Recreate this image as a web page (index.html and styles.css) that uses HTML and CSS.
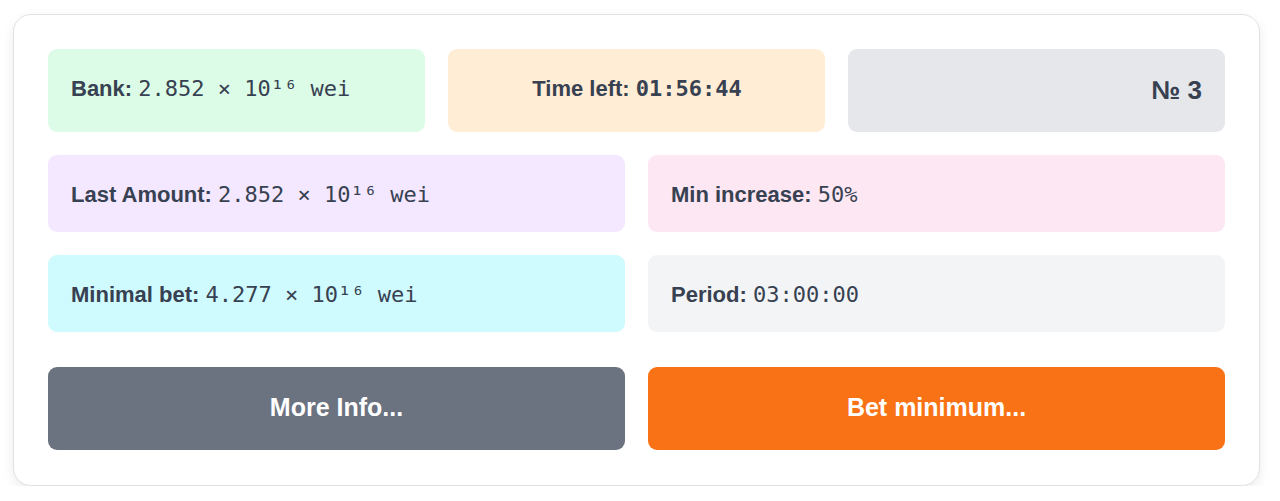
FILE: index.html
```html
<!DOCTYPE html>
<html lang="en">
<head>
<meta charset="utf-8">
<title>Auction</title>
<link rel="stylesheet" href="styles.css">
</head>
<body>
<div class="card">
  <div class="grid">
    <div class="tile tile-third bg-green"><span class="label">Bank:</span> <span class="mono">2.852 × 10¹⁶ wei</span></div>
    <div class="tile tile-third bg-orange center"><span class="label">Time left:</span> <span class="mono bold">01:56:44</span></div>
    <div class="tile tile-third bg-gray right"><span class="round">№ 3</span></div>
    <div class="tile tile-half bg-purple"><span class="label">Last Amount:</span> <span class="mono">2.852 × 10¹⁶ wei</span></div>
    <div class="tile tile-half bg-pink"><span class="label">Min increase:</span> <span class="mono">50%</span></div>
    <div class="tile tile-half bg-cyan"><span class="label">Minimal bet:</span> <span class="mono">4.277 × 10¹⁶ wei</span></div>
    <div class="tile tile-half bg-light"><span class="label">Period:</span> <span class="mono">03:00:00</span></div>
  </div>
  <div class="actions">
    <button class="btn btn-gray">More Info...</button>
    <button class="btn btn-orange">Bet minimum...</button>
  </div>
</div>
</body>
</html>
```

FILE: styles.css
```css
html, body {
  margin: 0;
  padding: 0;
  background: #ffffff;
}

body {
  font-family: "Liberation Sans", Arial, sans-serif;
  color: #374151;
  padding: 14px 20px 0 13px;
}

.card {
  width: 1177px;
  border: 1px solid #e1e2e4;
  border-radius: 18px;
  padding: 34px 34px 35px 34px;
  background: #ffffff;
  box-shadow: 0 4px 12px rgba(0, 0, 0, 0.08);
}

.grid {
  display: grid;
  grid-template-columns: repeat(6, 1fr);
  grid-template-rows: 83px 77px 77px;
  column-gap: 23px;
  row-gap: 23px;
}

.tile {
  border-radius: 9px;
  padding: 25px 22px 0 23px;
  font-size: 22px;
  line-height: 29px;
  white-space: nowrap;
}

.tile-third { grid-column: span 2; }
.tile-half { grid-column: span 3; }

.center { text-align: center; }
.right { text-align: right; padding-right: 23px; }

.label { font-weight: 700; }

.mono {
  font-family: "DejaVu Sans Mono", "Liberation Mono", monospace;
  font-size: 22px;
}

.bold { font-weight: 700; }

.round {
  font-weight: 700;
  font-size: 26px;
  line-height: 33px;
}

.bg-green { background: #dcfce7; }
.bg-orange { background: #ffedd5; }
.bg-gray { background: #e5e7eb; }
.bg-purple { background: #f3e8ff; }
.bg-pink { background: #fce7f3; }
.bg-cyan { background: #cffafe; }
.bg-light { background: #f3f4f6; }

.actions {
  display: grid;
  grid-template-columns: 1fr 1fr;
  column-gap: 23px;
  margin-top: 35px;
}

.btn {
  height: 83px;
  border: none;
  border-radius: 9px;
  color: #ffffff;
  font-family: "Liberation Sans", Arial, sans-serif;
  font-weight: 700;
  font-size: 25px;
  padding: 0 0 2px 0;
  cursor: pointer;
}

.btn-gray { background: #6b7280; }
.btn-orange { background: #f97316; }
```
